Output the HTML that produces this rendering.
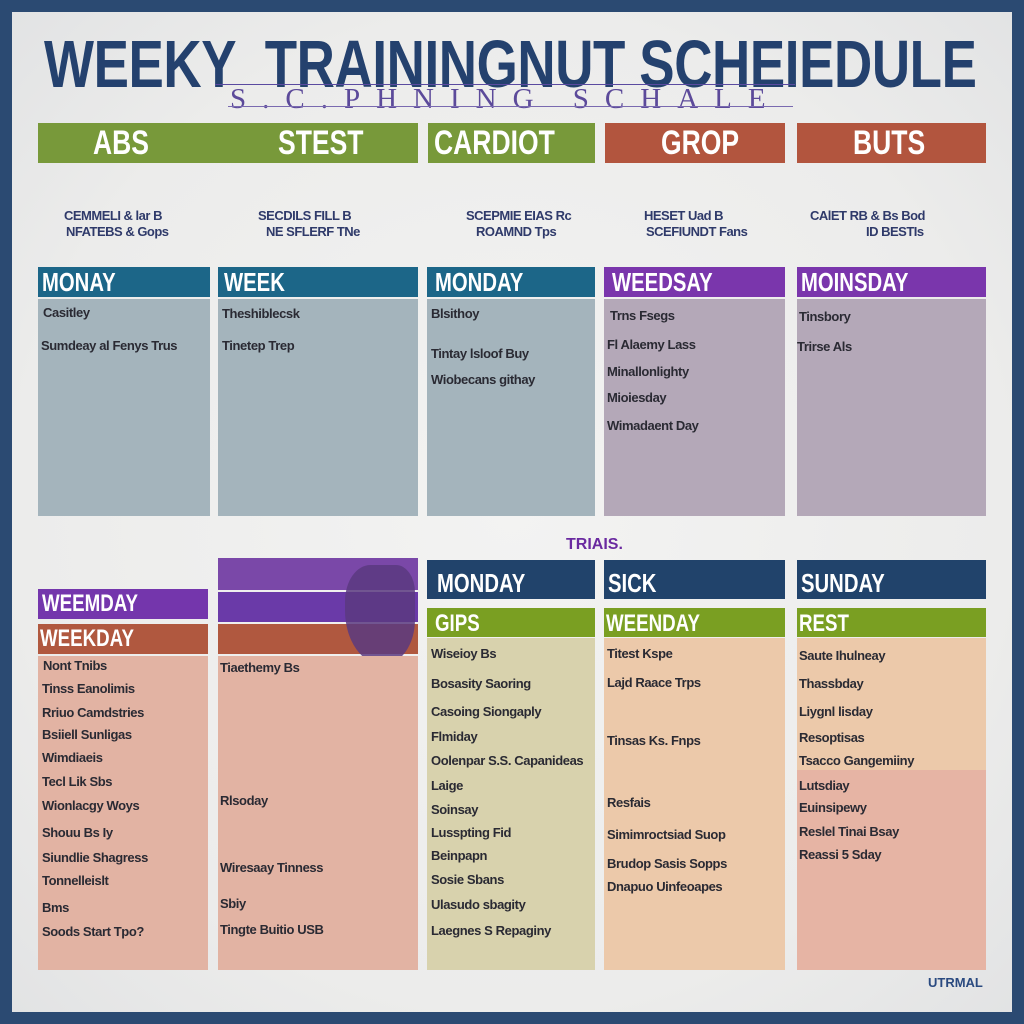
<!DOCTYPE html>
<html><head><meta charset="utf-8"><style>
*{margin:0;padding:0;box-sizing:border-box}
body{width:1024px;height:1024px;background:#2b4a72;position:relative;overflow:hidden;font-family:"Liberation Sans",sans-serif}
#in{position:absolute;left:12px;top:12px;width:1000px;height:1000px;background:radial-gradient(ellipse at center,#f3f3f2 0%,#ececeb 70%,#e2e3e4 100%)}
.a{position:absolute}
.bar{position:absolute;color:#fff;font-weight:bold;white-space:nowrap;overflow:hidden}
.bar span,.t span{display:inline-block;transform:scaleX(.78);transform-origin:left center}
.t{position:absolute;font-weight:bold;font-size:13px;color:#2a2a33;white-space:nowrap;letter-spacing:-.4px}
.s{position:absolute;font-weight:bold;font-size:13px;color:#2f3a6a;white-space:nowrap;letter-spacing:-.5px}
</style></head><body>
<div id="in"></div>
<div class="a" style="left:44px;top:26px;font-size:67px;font-weight:bold;color:#24416e;white-space:nowrap;letter-spacing:-.5px"><span style="display:inline-block;transform:scaleX(.79);transform-origin:left">WEEKY&nbsp; TRAININGNUT SCHEIEDULE</span></div>
<div class="a" style="left:215px;top:84px;width:580px;height:1px;background:#5a4aa0"></div>
<div class="a" style="left:230px;top:83px;font-family:'Liberation Serif',serif;font-size:29px;color:#5c4a9a;letter-spacing:16px;white-space:nowrap">S.C.PHNING SCHALE</div>
<div class="a" style="left:228px;top:106px;width:565px;height:1px;background:#7a6ab0"></div>

<div class="bar" style="left:38px;top:123px;width:380px;height:40px;background:#78993a;font-size:34px;line-height:40px"><span style="margin-left:55px">ABS</span><span style="position:absolute;left:240px">STEST</span></div>
<div class="bar" style="left:428px;top:123px;width:167px;height:40px;background:#78993a;font-size:34px;line-height:40px;text-align:center"><span>CARDIOT</span></div>
<div class="bar" style="left:605px;top:123px;width:180px;height:40px;background:#b2553e;font-size:34px;line-height:40px"><span style="margin-left:56px">GROP</span></div>
<div class="bar" style="left:797px;top:123px;width:189px;height:40px;background:#b2553e;font-size:34px;line-height:40px"><span style="margin-left:56px">BUTS</span></div>

<div class="s" style="left:64px;top:208px">CEMMELI &amp; lar B</div><div class="s" style="left:66px;top:224px">NFATEBS &amp; Gops</div>
<div class="s" style="left:258px;top:208px">SECDILS FILL B</div><div class="s" style="left:266px;top:224px">NE SFLERF TNe</div>
<div class="s" style="left:466px;top:208px">SCEPMIE EIAS Rc</div><div class="s" style="left:476px;top:224px">ROAMND Tps</div>
<div class="s" style="left:644px;top:208px">HESET Uad B</div><div class="s" style="left:646px;top:224px">SCEFIUNDT Fans</div>
<div class="s" style="left:810px;top:208px">CAlET RB &amp; Bs Bod</div><div class="s" style="left:866px;top:224px">ID BESTIs</div>

<div class="bar" style="left:38px;top:267px;width:172px;height:30px;background:#1c6688;font-size:26px;line-height:30px;padding-left:4px"><span>MONAY</span></div>
<div class="bar" style="left:218px;top:267px;width:200px;height:30px;background:#1c6688;font-size:26px;line-height:30px;padding-left:6px"><span>WEEK</span></div>
<div class="bar" style="left:427px;top:267px;width:168px;height:30px;background:#1c6688;font-size:26px;line-height:30px;padding-left:8px"><span>MONDAY</span></div>
<div class="bar" style="left:604px;top:267px;width:181px;height:30px;background:#7a36ac;font-size:26px;line-height:30px;padding-left:8px"><span>WEEDSAY</span></div>
<div class="bar" style="left:797px;top:267px;width:189px;height:30px;background:#7a36ac;font-size:26px;line-height:30px;padding-left:4px"><span>MOINSDAY</span></div>
<div class="a" style="left:38px;top:299px;width:172px;height:217px;background:#a4b4bc"></div>
<div class="a" style="left:218px;top:299px;width:200px;height:217px;background:#a4b4bc"></div>
<div class="a" style="left:427px;top:299px;width:168px;height:217px;background:#a4b4bc"></div>
<div class="a" style="left:604px;top:299px;width:181px;height:217px;background:#b4a8b8"></div>
<div class="a" style="left:797px;top:299px;width:189px;height:217px;background:#b4a8b8"></div>
<div class="t" style="left:43px;top:305px">Casitley</div><div class="t" style="left:41px;top:338px">Sumdeay al Fenys Trus</div>
<div class="t" style="left:222px;top:306px">Theshiblecsk</div><div class="t" style="left:222px;top:338px">Tinetep Trep</div>
<div class="t" style="left:431px;top:306px">Blsithoy</div><div class="t" style="left:431px;top:346px">Tintay lsloof Buy</div><div class="t" style="left:431px;top:372px">Wiobecans githay</div>
<div class="t" style="left:610px;top:308px">Trns Fsegs</div><div class="t" style="left:607px;top:337px">Fl Alaemy Lass</div><div class="t" style="left:607px;top:364px">Minallonlighty</div><div class="t" style="left:607px;top:390px">Mioiesday</div><div class="t" style="left:607px;top:418px">Wimadaent Day</div>
<div class="t" style="left:799px;top:309px">Tinsbory</div><div class="t" style="left:797px;top:339px">Trirse Als</div>

<div class="a" style="left:566px;top:536px;font-size:16px;font-weight:bold;color:#6a2aa0">TRIAIS.</div>

<div class="a" style="left:218px;top:558px;width:200px;height:32px;background:#7a48a8"></div>
<div class="a" style="left:218px;top:592px;width:200px;height:30px;background:#6a3aa8"></div>
<div class="bar" style="left:38px;top:589px;width:170px;height:30px;background:#7436ac;font-size:24px;line-height:30px;padding-left:4px"><span>WEEMDAY</span></div>
<div class="bar" style="left:38px;top:624px;width:170px;height:30px;background:#b0583f;font-size:24px;line-height:30px;padding-left:2px"><span>WEEKDAY</span></div>
<div class="a" style="left:218px;top:624px;width:200px;height:30px;background:#b0583f"></div>
<div class="a" style="left:345px;top:565px;width:70px;height:100px;background:#5a3a80;border-radius:40% 30% 50% 60%;opacity:.85"></div>
<div class="a" style="left:38px;top:656px;width:170px;height:314px;background:#e2b3a3"></div>
<div class="a" style="left:218px;top:656px;width:200px;height:314px;background:#e2b3a3"></div>

<div class="bar" style="left:427px;top:560px;width:168px;height:39px;background:#21436b;font-size:26px;line-height:46px;padding-left:10px"><span>MONDAY</span></div>
<div class="bar" style="left:604px;top:560px;width:181px;height:39px;background:#21436b;font-size:26px;line-height:46px;padding-left:4px"><span>SICK</span></div>
<div class="bar" style="left:797px;top:560px;width:189px;height:39px;background:#21436b;font-size:26px;line-height:46px;padding-left:4px"><span>SUNDAY</span></div>
<div class="bar" style="left:427px;top:608px;width:168px;height:29px;background:#7a9f22;font-size:24px;line-height:32px;padding-left:8px"><span>GIPS</span></div>
<div class="bar" style="left:604px;top:608px;width:181px;height:29px;background:#7a9f22;font-size:24px;line-height:32px;padding-left:2px"><span>WEENDAY</span></div>
<div class="bar" style="left:797px;top:608px;width:189px;height:29px;background:#7a9f22;font-size:24px;line-height:32px;padding-left:2px"><span>REST</span></div>
<div class="a" style="left:427px;top:638px;width:168px;height:332px;background:#d8d2ad"></div>
<div class="a" style="left:604px;top:638px;width:181px;height:332px;background:#ecc9aa"></div>
<div class="a" style="left:797px;top:638px;width:189px;height:132px;background:#ecc9aa"></div>
<div class="a" style="left:797px;top:770px;width:189px;height:200px;background:#e6b4a4"></div>

<div class="t" style="left:43px;top:658px">Nont Tnibs</div><div class="t" style="left:42px;top:681px">Tinss Eanolimis</div><div class="t" style="left:42px;top:705px">Rriuo Camdstries</div><div class="t" style="left:42px;top:727px">Bsiiell Sunligas</div><div class="t" style="left:42px;top:750px">Wimdiaeis</div><div class="t" style="left:42px;top:774px">Tecl Lik Sbs</div><div class="t" style="left:42px;top:798px">Wionlacgy Woys</div><div class="t" style="left:42px;top:825px">Shouu Bs Iy</div><div class="t" style="left:42px;top:850px">Siundlie Shagress</div><div class="t" style="left:42px;top:873px">Tonnelleislt</div><div class="t" style="left:42px;top:900px">Bms</div><div class="t" style="left:42px;top:924px">Soods Start Tpo?</div>
<div class="t" style="left:220px;top:660px">Tiaethemy Bs</div><div class="t" style="left:220px;top:793px">Rlsoday</div><div class="t" style="left:220px;top:860px">Wiresaay Tinness</div><div class="t" style="left:220px;top:896px">Sbiy</div><div class="t" style="left:220px;top:922px">Tingte Buitio USB</div>
<div class="t" style="left:431px;top:646px">Wiseioy Bs</div><div class="t" style="left:431px;top:676px">Bosasity Saoring</div><div class="t" style="left:431px;top:704px">Casoing Siongaply</div><div class="t" style="left:431px;top:729px">Flmiday</div><div class="t" style="left:431px;top:753px">Oolenpar S.S. Capanideas</div><div class="t" style="left:431px;top:778px">Laige</div><div class="t" style="left:431px;top:802px">Soinsay</div><div class="t" style="left:431px;top:825px">Lusspting Fid</div><div class="t" style="left:431px;top:848px">Beinpapn</div><div class="t" style="left:431px;top:872px">Sosie Sbans</div><div class="t" style="left:431px;top:897px">Ulasudo sbagity</div><div class="t" style="left:431px;top:923px">Laegnes S Repaginy</div>
<div class="t" style="left:607px;top:646px">Titest Kspe</div><div class="t" style="left:607px;top:675px">Lajd Raace Trps</div><div class="t" style="left:607px;top:733px">Tinsas Ks. Fnps</div><div class="t" style="left:607px;top:795px">Resfais</div><div class="t" style="left:607px;top:827px">Simimroctsiad Suop</div><div class="t" style="left:607px;top:856px">Brudop Sasis Sopps</div><div class="t" style="left:607px;top:879px">Dnapuo Uinfeoapes</div>
<div class="t" style="left:799px;top:648px">Saute Ihulneay</div><div class="t" style="left:799px;top:676px">Thassbday</div><div class="t" style="left:799px;top:704px">Liygnl lisday</div><div class="t" style="left:799px;top:730px">Resoptisas</div><div class="t" style="left:799px;top:753px">Tsacco Gangemiiny</div><div class="t" style="left:799px;top:778px">Lutsdiay</div><div class="t" style="left:799px;top:800px">Euinsipewy</div><div class="t" style="left:799px;top:824px">Reslel Tinai Bsay</div><div class="t" style="left:799px;top:847px">Reassi 5 Sday</div>
<div class="a" style="left:928px;top:975px;font-size:13px;font-weight:bold;color:#2a4a80">UTRMAL</div>
</body></html>
